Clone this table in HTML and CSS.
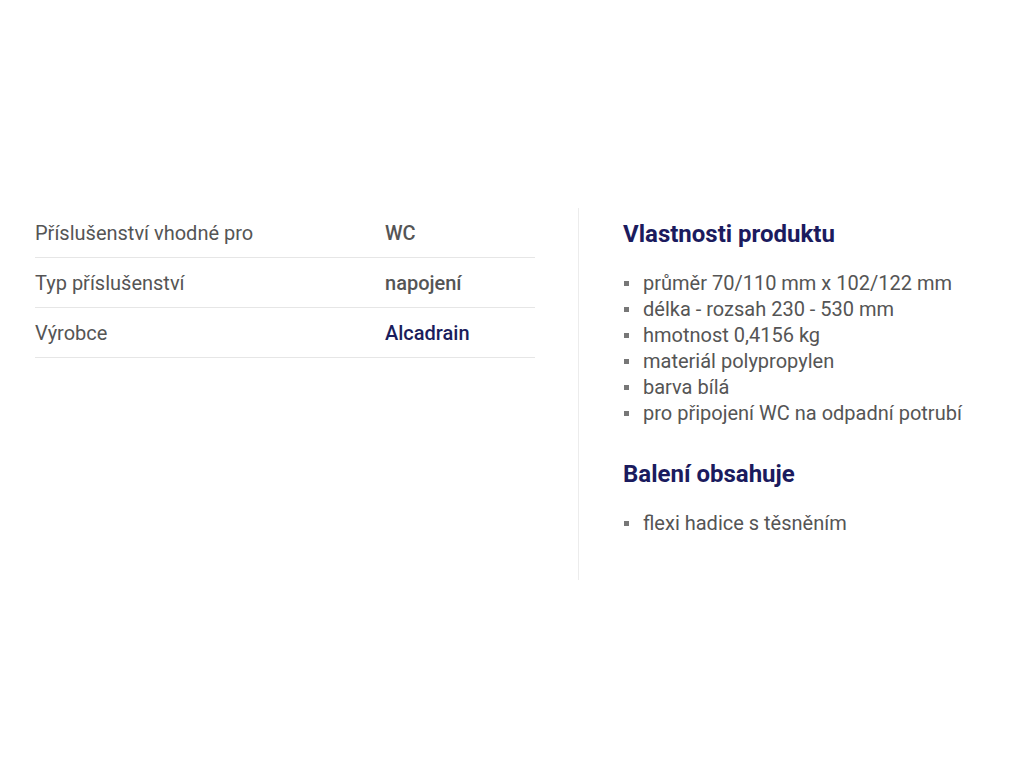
FILE: index.html
```html
<!DOCTYPE html>
<html lang="cs">
<head>
<meta charset="utf-8">
<title>Parametry</title>
<link rel="stylesheet" href="styles.css">
</head>
<body>
<div class="wrap">
  <div class="specs">
    <div class="row"><span class="label">Příslušenství vhodné pro</span><span class="value">WC</span></div>
    <div class="row"><span class="label">Typ příslušenství</span><span class="value">napojení</span></div>
    <div class="row"><span class="label">Výrobce</span><span class="value link">Alcadrain</span></div>
  </div>
  <div class="desc">
    <h2 class="title">Vlastnosti produktu</h2>
    <ul class="list">
      <li>průměr 70/110 mm x 102/122 mm</li>
      <li>délka - rozsah 230 - 530 mm</li>
      <li>hmotnost 0,4156 kg</li>
      <li>materiál polypropylen</li>
      <li>barva bílá</li>
      <li>pro připojení WC na odpadní potrubí</li>
    </ul>
    <h2 class="title second">Balení obsahuje</h2>
    <ul class="list">
      <li>flexi hadice s těsněním</li>
    </ul>
  </div>
</div>
</body>
</html>
```

FILE: styles.css
```css
html, body {
  margin: 0;
  padding: 0;
  background: #fff;
}
body {
  font-family: Roboto, "Liberation Sans", Arial, sans-serif;
  color: #555;
  font-size: 20px;
}
.wrap {
  display: flex;
  align-items: flex-start;
  padding: 208px 0 0 35px;
}
.specs {
  width: 500px;
}
.row {
  display: flex;
  align-items: center;
  height: 49px;
  border-bottom: 1px solid #e6e6e6;
}
.label {
  width: 350px;
  color: #555;
}
.value {
  font-weight: 500;
  color: #555;
}
.value.link {
  color: #1b1d5c;
}
.desc {
  margin-left: 43px;
  border-left: 1px solid #ececec;
  padding: 12px 0 44px 44px;
}
.title {
  margin: 0;
  font-size: 24px;
  line-height: 28px;
  font-weight: 700;
  color: #1b1b5e;
}
.title.second {
  margin-top: 34px;
}
.list {
  list-style: none;
  margin: 22px 0 0;
  padding: 0;
}
.list li {
  position: relative;
  line-height: 26px;
  padding-left: 20px;
  color: #555;
}
.list li::before {
  content: "";
  position: absolute;
  left: 1px;
  top: 11px;
  width: 5px;
  height: 5px;
  background: #777;
}
```
